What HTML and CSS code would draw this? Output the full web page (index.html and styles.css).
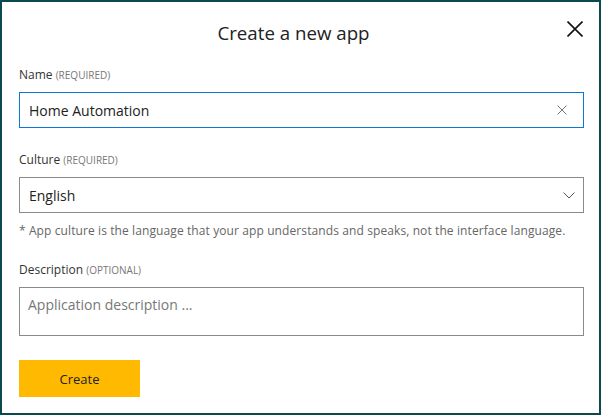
FILE: index.html
```html
<!DOCTYPE html>
<html lang="en">
<head>
<meta charset="utf-8">
<title>Create a new app</title>
<link rel="stylesheet" href="styles.css">
</head>
<body>
<div class="dialog">
  <div class="header">
    <span></span>
    <h1 class="title">Create a new app</h1>
    <button class="close" aria-label="Close">
      <svg width="16" height="16" viewBox="0 0 16 16"><path d="M0.5 0.5 L15.5 15.5 M15.5 0.5 L0.5 15.5" stroke="#111" stroke-width="1.6" fill="none"/></svg>
    </button>
  </div>

  <div class="label">Name <span class="hint">(REQUIRED)</span></div>
  <div class="input active">
    <span class="value">Home Automation</span>
    <svg class="clear" width="10" height="10" viewBox="0 0 10 10"><path d="M0.5 0.5 L9.5 9.5 M9.5 0.5 L0.5 9.5" stroke="#777" stroke-width="1" fill="none"/></svg>
  </div>

  <div class="label gap">Culture <span class="hint">(REQUIRED)</span></div>
  <div class="input">
    <span class="value">English</span>
    <svg class="chev" width="12" height="7" viewBox="0 0 12 7"><path d="M0.5 0.5 L6 6 L11.5 0.5" stroke="#555" stroke-width="1" fill="none"/></svg>
  </div>
  <p class="note">* App culture is the language that your app understands and speaks, not the interface language.</p>

  <div class="label gap2">Description <span class="hint">(OPTIONAL)</span></div>
  <div class="textarea"><span class="placeholder">Application description ...</span></div>

  <button class="create">Create</button>
</div>
</body>
</html>
```

FILE: styles.css
```css
html, body {
  margin: 0;
  padding: 0;
  background: #ffffff;
}
.dialog {
  box-sizing: border-box;
  width: 601px;
  height: 415px;
  border: 2px solid #0b4a4c;
  padding: 0 15px 0 17px;
  font-family: "Open Sans", "Noto Sans", sans-serif;
  color: #222;
  display: flex;
  flex-direction: column;
  align-items: stretch;
}
.header {
  height: 65px;
  display: grid;
  grid-template-columns: 1fr auto 1fr;
  align-items: start;
}
.title {
  margin: 17px 16px 0 0;
  font-size: 18.7px;
  font-weight: 400;
  line-height: 28px;
  color: #222;
}
.close {
  justify-self: end;
  margin-top: 19px;
  margin-right: 1px;
  padding: 0;
  border: 0;
  background: none;
  width: 16px;
  height: 16px;
  display: block;
}
.close svg { display: block; }
.label {
  font-size: 12px;
  line-height: 16px;
  color: #333;
  margin-bottom: 9px;
}
.label.gap { margin-top: 24px; margin-bottom: 9px; }
.label.gap2 { margin-top: 23px; }
.hint {
  font-size: 10px;
  color: #777;
}
.input {
  box-sizing: border-box;
  height: 36px;
  border: 1px solid #8a8a8a;
  display: flex;
  align-items: center;
  padding: 0 8px 0 9px;
}
.input.active { border-color: #0a78d4; }
.value {
  flex: 1;
  font-size: 14px;
  color: #222;
}
.clear { margin-right: 8px; }
.chev { margin-right: 0; }
.note {
  margin: 10px 0 0 0;
  font-size: 12px;
  letter-spacing: 0.1px;
  line-height: 16px;
  color: #666;
  white-space: nowrap;
}
.textarea {
  box-sizing: border-box;
  height: 49px;
  border: 1px solid #8a8a8a;
  padding: 5px 8px;
}
.placeholder {
  font-size: 14px;
  color: #777;
}
.create {
  margin-top: 24px;
  width: 121px;
  height: 37px;
  border: 0;
  background: #ffb900;
  font-family: inherit;
  font-size: 13px;
  color: #222;
  padding: 0;
}
```
